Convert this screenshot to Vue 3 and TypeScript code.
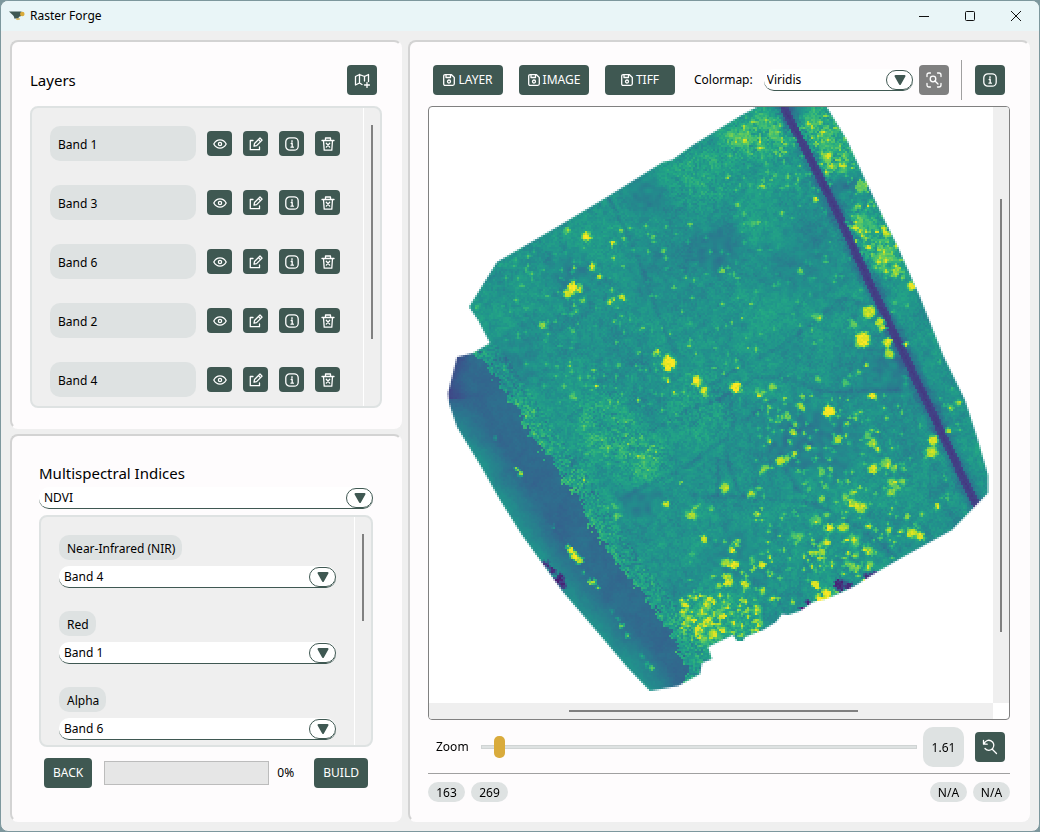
<script setup lang="ts">
import { onMounted, ref } from 'vue'

const layers = ref(['Band 1', 'Band 3', 'Band 6', 'Band 2', 'Band 4'])
const bands = ['Band 1', 'Band 2', 'Band 3', 'Band 4', 'Band 6']
const indexName = ref('NDVI')
const inputs = ref([
  { id: 'nir', label: 'Near-Infrared (NIR)', band: 'Band 4' },
  { id: 'red', label: 'Red', band: 'Band 1' },
  { id: 'alpha', label: 'Alpha', band: 'Band 6' },
])
const exports = ['LAYER', 'IMAGE', 'TIFF']
const colormap = ref('Viridis')
const zoom = ref(3)
const progress = ref(0)
const canvas = ref<HTMLCanvasElement | null>(null)

type Point = [number, number]
type Blob = [number, number, number, number]

// Scene bounds of the raster view; one cell covers two scene units.
const LEFT = 429
const TOP = 107
const COLS = 282
const ROWS = 298
const CELL = 2

const VIRIDIS = [
  [68, 1, 84], [72, 36, 117], [65, 68, 135], [53, 95, 141], [42, 120, 142], [33, 145, 140],
  [34, 168, 132], [68, 191, 112], [122, 209, 81], [189, 223, 38], [253, 231, 37],
]

const OUTLINE: Point[] = [
  [740, 116], [757, 107], [757, 100], [822, 100], [828, 109], [847, 140], [863, 175], [883, 217], [897, 245],
  [920, 297], [943, 355], [965, 400], [977, 437], [988, 475], [988, 493], [952, 530], [903, 557], [877, 572],
  [853, 587], [840, 593], [826, 599], [813, 602], [800, 611], [788, 615], [782, 614], [776, 622], [763, 630],
  [745, 637], [743, 641], [737, 641], [733, 635], [708, 647], [712, 659], [702, 663], [700, 674], [678, 686],
  [650, 691], [627, 667], [600, 635], [563, 592], [540, 560], [522, 535], [500, 500], [482, 468], [457, 427],
  [449, 403], [448, 393], [457, 357], [473, 353], [490, 343], [478, 320], [469, 307], [497, 262], [557, 227],
  [607, 197], [663, 162], [672, 160], [693, 145],
]

const FIELD_EDGE: Point[] = [
  [470, 345], [483, 360], [503, 390], [510, 400], [540, 447], [573, 493], [590, 523], [613, 557], [640, 593],
  [667, 627], [687, 667], [684, 700],
]

const OUTER_RIM: Point[] = [
  [449, 403], [457, 427], [482, 468], [500, 500], [522, 535], [540, 560], [563, 592], [600, 635], [627, 667], [650, 691],
]

const ROAD: Point[] = [
  [783, 104], [785, 110], [830, 197], [867, 277], [897, 340], [926, 400], [950, 450], [976, 505],
]

const TRACKS: Point[][] = [
  [[608, 197], [635, 250], [655, 305], [670, 345], [684, 360]],
  [[565, 475], [583, 450], [627, 437], [653, 430], [687, 410], [717, 400], [757, 378], [790, 378], [820, 392], [897, 390]],
  [[620, 500], [647, 485], [687, 467], [727, 437], [735, 420], [730, 402], [717, 400]],
  [[727, 437], [727, 460], [738, 490], [743, 495]],
  [[690, 495], [730, 497], [813, 503], [863, 530], [890, 553]],
  [[700, 392], [730, 373], [780, 347], [813, 323], [843, 297], [865, 304]],
  [[735, 425], [752, 415], [775, 400]],
  [[787, 470], [797, 490]],
  [[718, 460], [718, 495]],
]

const PATCHES: Blob[] = [
  [745, 140, 22, 0.07], [773, 130, 20, 0.08], [815, 130, 20, 0.12], [835, 160, 20, 0.12], [700, 175, 28, 0.06],
  [860, 230, 20, 0.08], [880, 255, 16, 0.1], [607, 427, 30, 0.08], [640, 460, 26, 0.08], [580, 480, 18, 0.05],
  [700, 410, 30, 0.05], [720, 625, 34, 0.06], [650, 275, 30, -0.02], [715, 250, 22, -0.05], [510, 365, 30, -0.03],
  [800, 265, 40, -0.03], [570, 275, 18, -0.05], [820, 450, 34, -0.05], [790, 430, 28, -0.04], [640, 500, 18, -0.06],
  [890, 375, 26, -0.04], [735, 560, 28, -0.04], [845, 180, 12, -0.1], [797, 115, 12, -0.08], [645, 195, 18, -0.05],
]

const BLOBS: Blob[] = [
  [568, 231, 3, 0.92], [587, 237, 5, 0.97], [613, 242, 2, 1], [613, 258, 2, 0.9], [592, 267, 4, 0.93], [599, 277, 3, 0.93],
  [573, 288, 6, 0.99], [567, 295, 4, 0.92], [579, 289, 4, 0.95], [583, 301, 3, 0.85], [622, 297, 3, 0.92],
  [610, 302, 3, 0.95], [543, 326, 4, 0.85], [643, 329, 2, 0.98], [669, 363, 8, 1], [658, 352, 3, 0.95], [655, 355, 2, 0.95],
  [697, 381, 5, 1], [704, 390, 4, 0.93], [736, 387, 6, 1], [738, 368, 2, 1], [637, 352, 2, 0.85], [689, 345, 2, 0.85],
  [722, 270, 3, 0.8], [697, 263, 2, 0.85], [667, 226, 2, 0.85], [653, 237, 2, 0.8], [664, 251, 2, 0.8], [723, 305, 2, 0.85],
  [731, 135, 4, 0.8], [477, 308, 3, 0.7], [577, 311, 2, 0.85], [614, 321, 2, 0.8], [668, 380, 2, 0.85], [674, 392, 2, 0.95],
  [573, 396, 3, 0.75], [827, 157, 5, 0.85], [816, 199, 3, 1], [863, 186, 6, 0.78], [884, 229, 3, 0.98], [887, 234, 3, 0.95],
  [858, 223, 7, 0.73], [882, 255, 11, 0.74], [896, 272, 5, 0.75], [911, 286, 4, 0.98], [869, 312, 7, 0.91], [880, 322, 5, 0.9],
  [883, 328, 3, 0.9], [854, 325, 4, 0.78], [863, 340, 8, 0.99], [887, 343, 5, 0.95], [889, 354, 5, 0.88], [906, 344, 3, 1],
  [818, 318, 5, 0.74], [866, 366, 2, 0.9], [858, 372, 3, 0.78], [819, 379, 2, 0.9], [847, 383, 4, 0.72], [873, 396, 4, 1],
  [760, 395, 5, 0.78], [772, 387, 4, 0.82], [800, 271, 2, 0.82], [895, 302, 2, 0.72], [745, 140, 9, 0.72], [773, 133, 7, 0.72],
  [762, 118, 8, 0.66], [738, 205, 3, 0.8], [753, 223, 3, 0.72], [742, 318, 2, 0.85], [830, 140, 9, 0.68], [812, 120, 8, 0.66],
  [843, 168, 6, 0.7], [829, 411, 6, 1], [838, 440, 5, 0.88], [856, 414, 5, 0.77], [847, 423, 2, 0.9], [801, 407, 5, 0.86],
  [787, 415, 4, 0.82], [770, 407, 3, 0.82], [770, 420, 3, 0.7], [780, 421, 3, 0.75], [792, 432, 4, 0.82], [795, 425, 3, 0.8],
  [790, 442, 2, 0.8], [808, 448, 3, 0.8], [795, 454, 4, 0.9], [781, 461, 5, 0.9], [787, 458, 3, 0.85], [764, 469, 4, 0.84],
  [798, 471, 3, 0.82], [816, 459, 3, 0.82], [822, 472, 4, 0.76], [831, 469, 2, 0.85], [867, 437, 5, 0.76], [873, 443, 5, 0.85],
  [878, 449, 3, 0.8], [950, 408, 3, 0.88], [958, 403, 3, 0.8], [949, 430, 3, 0.92], [933, 440, 6, 0.94], [931, 452, 6, 0.91],
  [873, 469, 5, 0.92], [887, 463, 6, 0.8], [893, 468, 4, 0.8], [892, 483, 5, 0.8], [902, 482, 4, 0.82], [892, 492, 5, 0.82],
  [898, 487, 3, 0.78], [846, 497, 4, 0.8], [852, 493, 3, 0.8], [853, 503, 5, 0.85], [860, 508, 6, 0.87], [864, 506, 4, 0.85],
  [938, 507, 4, 0.98], [825, 487, 3, 0.82], [821, 499, 3, 0.86], [751, 494, 4, 0.9], [757, 514, 3, 0.96], [827, 515, 3, 0.82],
  [817, 519, 5, 0.72], [830, 528, 4, 1], [843, 528, 5, 0.88], [869, 526, 3, 1], [889, 531, 3, 0.92], [907, 517, 3, 0.85],
  [915, 525, 4, 0.78], [912, 533, 6, 0.93], [920, 536, 5, 0.96], [903, 531, 3, 0.84], [922, 514, 2, 0.84], [855, 538, 6, 0.75],
  [868, 550, 4, 0.82], [826, 542, 4, 0.86], [822, 552, 4, 0.86], [819, 558, 3, 0.8], [812, 553, 3, 0.85], [795, 537, 6, 0.75],
  [850, 566, 4, 0.78], [870, 565, 4, 0.8], [857, 555, 3, 0.72], [737, 543, 3, 1], [732, 550, 3, 1], [734, 565, 5, 0.96],
  [762, 565, 3, 0.95], [753, 560, 3, 0.78], [746, 585, 4, 0.9], [763, 590, 2, 0.88], [816, 585, 4, 0.97], [792, 602, 2, 0.9],
  [753, 610, 4, 0.72], [760, 622, 4, 0.76], [734, 624, 3, 0.85], [725, 488, 4, 0.9], [681, 482, 2, 0.88], [667, 504, 4, 0.92],
  [692, 515, 5, 0.88], [696, 507, 3, 0.85], [687, 512, 3, 0.8], [711, 509, 3, 0.8], [704, 539, 4, 0.92], [615, 507, 4, 0.74],
  [617, 515, 4, 0.74], [608, 508, 3, 0.7], [725, 563, 4, 0.86], [727, 577, 4, 0.92], [728, 583, 5, 0.94], [719, 586, 3, 0.86],
  [707, 605, 5, 0.8], [683, 602, 3, 0.76], [688, 618, 4, 0.88], [684, 613, 3, 0.84], [698, 630, 4, 0.8], [707, 623, 5, 0.82],
  [713, 633, 5, 0.86], [722, 630, 3, 0.88], [722, 615, 3, 0.8], [703, 640, 4, 0.8], [827, 594, 6, 1], [819, 598, 5, 1],
  [836, 591, 3, 0.85], [840, 585, 6, 0.14], [849, 586, 4, 0.16], [868, 577, 5, 0.16], [874, 573, 3, 0.16], [802, 609, 3, 0.12],
  [808, 603, 3, 0.14], [568, 547, 2, 0.85], [571, 551, 3, 1], [575, 556, 4, 1], [580, 561, 3, 0.95], [592, 582, 3, 0.92],
  [597, 588, 2, 0.85], [584, 572, 2, 0.7], [517, 470, 2, 0.9], [521, 474, 2, 0.88], [495, 437, 2, 0.6], [553, 527, 2, 0.62],
  [612, 611, 2, 0.6], [617, 619, 2, 0.68], [622, 626, 2, 0.82], [627, 636, 3, 0.85], [642, 656, 2, 0.62], [647, 664, 2, 0.68],
  [652, 668, 2, 0.75], [546, 564, 4, 0.14], [552, 572, 4, 0.16], [559, 579, 5, 0.12], [563, 586, 4, 0.14],
]

// x, y, width, height, count, strength
const SPRINKLES = [
  [755, 395, 150, 180, 190, 0.22], [680, 595, 80, 45, 110, 0.26], [560, 215, 200, 190, 110, 0.18], [725, 110, 130, 80, 170, 0.16],
  [850, 190, 60, 90, 110, 0.18], [500, 360, 180, 120, 110, 0.14], [800, 540, 70, 50, 50, 0.22], [690, 540, 90, 60, 35, 0.24],
  [740, 200, 130, 190, 60, 0.14], [500, 250, 80, 100, 50, 0.14], [890, 300, 80, 200, 50, 0.14],
]

function hash(x: number, y: number): number {
  let h = Math.imul(x, 374761393) ^ Math.imul(y, 668265263)
  h = Math.imul(h ^ (h >>> 13), 1274126177)
  h = Math.imul(h ^ (h >>> 15), 2246822519)
  return ((h ^ (h >>> 16)) >>> 0) / 4294967295
}

function noise(x: number, y: number, scale: number): number {
  const gx = Math.floor(x / scale)
  const gy = Math.floor(y / scale)
  const smooth = (t: number) => t * t * (3 - 2 * t)
  const fx = smooth(x / scale - gx)
  const fy = smooth(y / scale - gy)
  const upper = hash(gx, gy) * (1 - fx) + hash(gx + 1, gy) * fx
  const lower = hash(gx, gy + 1) * (1 - fx) + hash(gx + 1, gy + 1) * fx
  return upper * (1 - fy) + lower * fy - 0.5
}

function distanceTo(path: Point[], x: number, y: number): number {
  let best = Infinity
  for (let i = 1; i < path.length; i++) {
    const [ax, ay] = path[i - 1]
    const dx = path[i][0] - ax
    const dy = path[i][1] - ay
    const t = Math.max(0, Math.min(1, ((x - ax) * dx + (y - ay) * dy) / (dx * dx + dy * dy)))
    best = Math.min(best, Math.hypot(x - ax - t * dx, y - ay - t * dy))
  }
  return best
}

function edgeX(y: number): number {
  for (let i = 1; i < FIELD_EDGE.length; i++) {
    const [ax, ay] = FIELD_EDGE[i - 1]
    const [bx, by] = FIELD_EDGE[i]
    if (y >= ay && y <= by) return ax + ((bx - ax) * (y - ay)) / (by - ay)
  }
  return -Infinity
}

function vegetation(x: number, y: number): number {
  const grain = hash(Math.round(x), Math.round(y)) - 0.5
  let value = 0.51 + grain * 0.07 + noise(x, y, 5) * 0.08 + noise(x, y, 14) * 0.06 + noise(x, y, 45) * 0.06
  for (const [px, py, radius, delta] of PATCHES) {
    const falloff = 1 - Math.hypot(x - px, y - py) / (radius * 1.5)
    if (falloff > 0) value += delta * Math.min(1, falloff * 1.6) * (1 + grain * 1.2 + noise(x, y, 6) * 1.4)
  }
  for (const track of TRACKS) {
    const d = distanceTo(track, x, y)
    if (d < 4) value -= 0.065 * (1 - d / 4)
  }
  const inside = x - edgeX(y)
  const ragged = inside + noise(x, y, 4) * 12 + grain * 5
  if (ragged < 0) {
    value = 0.345 + noise(x, y, 20) * 0.05 + noise(x, y, 5) * 0.03 + grain * 0.02
    const rim = distanceTo(OUTER_RIM, x, y)
    if (rim < 30 && y > 400) value += 0.16 * (1 - rim / 30) * Math.min(1, (y - 400) / 50)
    if (y < 400) value -= Math.max(0, (472 - x) / 26) * 0.14
  } else if (inside < 26) {
    value += 0.05 * (1 - inside / 26) + grain * 0.12 + noise(x, y, 4) * 0.08
  }
  const road = distanceTo(ROAD, x, y)
  if (road < 4) value = 0.17 + grain * 0.03 + road * 0.01
  else if (road < 12) value -= (12 - road) * 0.018
  for (const [bx, by, radius, target] of BLOBS) {
    const looseness = target < 0.8 && target > 0.5 ? radius * 1.5 : 3
    const d = Math.hypot(x - bx, y - by) + grain * 2.4 + noise(x, y, 4) * looseness
    if (d < radius + 1) {
      const mix = Math.min(1, (radius + 1 - d) / 3)
      value += (target + grain * 0.1 - value) * mix
    }
  }
  return Math.max(0.08, Math.min(1, value))
}

function paint(ctx: CanvasRenderingContext2D): void {
  const field = new Float32Array(COLS * ROWS)
  for (let row = 0; row < ROWS; row++) {
    for (let col = 0; col < COLS; col++) {
      field[row * COLS + col] = vegetation(LEFT + col * CELL + 1, TOP + row * CELL + 1)
    }
  }
  SPRINKLES.forEach(([x, y, width, height, count, strength], group) => {
    for (let i = 0; i < count; i++) {
      const px = x + hash(i * 3 + 11, group * 31 + 7) * width
      const py = y + hash(i * 5 + 503, group * 17 + 3) * height
      const at = Math.floor((py - TOP) / CELL) * COLS + Math.floor((px - LEFT) / CELL)
      if (px < edgeX(py) || field[at] < 0.4) continue
      const boost = strength * (0.5 + hash(i, 91 + group) * 0.9)
      field[at] = Math.min(0.95, field[at] + boost)
      for (const near of [1, -1, COLS, -COLS]) {
        const share = hash(i + near, group) * 0.8
        field[at + near] = Math.min(0.95, field[at + near] + boost * share)
      }
    }
  })
  const image = ctx.createImageData(COLS, ROWS)
  field.forEach((value, i) => {
    const position = value * (VIRIDIS.length - 1)
    const stop = Math.min(VIRIDIS.length - 2, Math.floor(position))
    const mix = position - stop
    for (let c = 0; c < 3; c++) {
      image.data[i * 4 + c] = VIRIDIS[stop][c] * (1 - mix) + VIRIDIS[stop + 1][c] * mix
    }
    image.data[i * 4 + 3] = 255
  })
  ctx.putImageData(image, 0, 0)
  ctx.globalCompositeOperation = 'destination-in'
  ctx.beginPath()
  OUTLINE.forEach(([x, y]) => ctx.lineTo((x - LEFT) / CELL, (y - TOP) / CELL))
  ctx.closePath()
  ctx.fill()
}

onMounted(() => {
  const ctx = canvas.value?.getContext('2d')
  if (ctx) paint(ctx)
})
</script>

<template>
  <div class="desktop">
    <div class="window">
      <header class="titlebar">
        <svg class="logo" viewBox="0 0 16 12" aria-hidden="true">
          <path d="M0 1.500h12.500v4.500c-1.500.2-2.500.7-2.900 1.500v.9H5.200v-.9C5 5.500 2.500 4.200 0 1.500z" fill="#3f5852" />
          <circle cx="13.300" cy="4" r="2.300" fill="#d9ab3c" />
          <path d="M7 8.400h4v1H9.700L9 10.200l-.700-.8H7z" fill="#d9ab3c" />
        </svg>
        <span class="app-name">Raster Forge</span>
        <button class="caption" type="button" aria-label="Minimize">
          <svg viewBox="0 0 12 12"><path d="M1 6.500h10" /></svg>
        </button>
        <button class="caption" type="button" aria-label="Maximize">
          <svg viewBox="0 0 12 12"><rect x="1.500" y="1.500" width="9" height="9" rx="1" /></svg>
        </button>
        <button class="caption" type="button" aria-label="Close">
          <svg viewBox="0 0 12 12"><path d="M1 1l10 10M11 1L1 11" /></svg>
        </button>
      </header>

      <main class="workspace">
        <div class="side">
          <section class="panel layers">
            <div class="panel-head">
              <h2>Layers</h2>
              <button class="btn square" type="button" aria-label="Add layer">
                <svg class="icon i16" viewBox="0 0 16 16">
                  <path d="M8 12.500l-2.500-1.500L1.500 13V4.500l4-2 5 2 4-2v7M5.500 2.500V11M10.500 4.500V9M13 10.500v5M10.500 13h5" />
                </svg>
              </button>
            </div>
            <div class="scroll-box">
              <ul class="rows">
                <li v-for="layer in layers" :key="layer" class="row">
                  <span class="name">{{ layer }}</span>
                  <button class="btn small" type="button" :aria-label="`Show ${layer}`">
                    <svg class="icon i14" viewBox="0 0 14 14">
                      <path d="M.800 7C2.300 4.200 4.500 2.900 7 2.900S11.700 4.200 13.200 7C11.700 9.800 9.500 11.100 7 11.100S2.300 9.800.800 7z" />
                      <circle cx="7" cy="7" r="1.600" />
                    </svg>
                  </button>
                  <button class="btn small" type="button" :aria-label="`Edit ${layer}`">
                    <svg class="icon i14" viewBox="0 0 14 14">
                      <path d="M4 3.500H1.300v9.200h9.200V10M5 9.200l.500-2.700L11 1l2.100 2.100L7.600 8.600zM9.500 2.600l2 2" />
                    </svg>
                  </button>
                  <button class="btn small" type="button" :aria-label="`About ${layer}`">
                    <svg class="icon i14" viewBox="0 0 14 14">
                      <rect x=".800" y=".800" width="12.400" height="12.400" rx="4" />
                      <path d="M6.200 6.500H7.200V10M6 10.200h2.400M7 3.700v1.300" />
                    </svg>
                  </button>
                  <button class="btn small" type="button" :aria-label="`Delete ${layer}`">
                    <svg class="icon i14" viewBox="0 0 14 14">
                      <path d="M1 3.500h12M4.500 3.500V1h5v2.500M2.500 3.500l.700 9.700h7.600l.700-9.700M5.300 6.300l3.400 3.800M8.700 6.300l-3.400 3.800" />
                    </svg>
                  </button>
                </li>
              </ul>
              <div class="track"><span class="thumb layers-thumb"></span></div>
            </div>
          </section>

          <section class="panel indices">
            <h2 id="indices-title">Multispectral Indices</h2>
            <div class="combo">
              <select v-model="indexName" aria-labelledby="indices-title">
                <option>NDVI</option>
                <option>NDWI</option>
              </select>
              <span class="arrow"><svg viewBox="0 0 14 12"><path d="M2.500 2h9L7 10z" /></svg></span>
            </div>
            <div class="scroll-box">
              <div class="fields">
                <div v-for="input in inputs" :key="input.id" class="field">
                  <label :for="input.id">{{ input.label }}</label>
                  <div class="combo">
                    <select :id="input.id" v-model="input.band">
                      <option v-for="band in bands" :key="band">{{ band }}</option>
                    </select>
                    <span class="arrow"><svg viewBox="0 0 14 12"><path d="M2.500 2h9L7 10z" /></svg></span>
                  </div>
                </div>
              </div>
              <div class="track"><span class="thumb fields-thumb"></span></div>
            </div>
            <div class="actions">
              <button class="btn" type="button">BACK</button>
              <progress :value="progress" max="100" aria-label="Build progress"></progress>
              <span class="percent">{{ progress }}%</span>
              <button class="btn" type="button">BUILD</button>
            </div>
          </section>
        </div>

        <section class="panel viewer">
          <div class="toolbar">
            <div class="exports">
              <button v-for="name in exports" :key="name" class="btn export" type="button">
                <svg class="icon i12" viewBox="0 0 12 12">
                  <path d="M.700 2.200Q.700.700 2.200.700H8.500L11.300 3.500V9.800Q11.300 11.300 9.800 11.300H2.200Q.700 11.300.700 9.800zM3 1v2.500h4.500V1" />
                  <circle cx="6" cy="7.500" r="1.500" />
                </svg>
                {{ name }}
              </button>
            </div>
            <label for="colormap">Colormap:</label>
            <div class="combo">
              <select id="colormap" v-model="colormap">
                <option>Viridis</option>
                <option>Gray</option>
              </select>
              <span class="arrow"><svg viewBox="0 0 14 12"><path d="M2.500 2h9L7 10z" /></svg></span>
            </div>
            <button class="btn square muted" type="button" aria-label="Inspect area">
              <svg class="icon i16" viewBox="0 0 16 16">
                <path d="M1 4.500V3q0-2 2-2h1.500M11.500 1H13q2 0 2 2v1.500M15 11.500V13q0 2-2 2h-1.500M4.500 15H3q-2 0-2-2v-1.500M9 9l3 3" />
                <circle cx="7" cy="7" r="2.800" />
              </svg>
            </button>
            <span class="divider"></span>
            <button class="btn square" type="button" aria-label="Information">
              <svg class="icon i14" viewBox="0 0 14 14">
                <rect x=".800" y=".800" width="12.400" height="12.400" rx="4" />
                <path d="M6.200 6.500H7.200V10M6 10.200h2.400M7 3.700v1.300" />
              </svg>
            </button>
          </div>

          <div class="view">
            <canvas ref="canvas" width="282" height="298" role="img" aria-label="NDVI raster"></canvas>
            <div class="v-track"><span></span></div>
            <div class="h-track"><span></span></div>
          </div>

          <div class="zoom">
            <label for="zoom">Zoom</label>
            <input id="zoom" v-model="zoom" type="range" min="0" max="100" />
            <output for="zoom">1.61</output>
            <button class="btn square" type="button" aria-label="Reset zoom">
              <svg class="icon i16" viewBox="0 0 16 16">
                <path d="M1.500 1.500v3.700h3.700M2 5A5 5 0 1 1 3 9.500M10 10l4.500 4.500" />
              </svg>
            </button>
          </div>

          <footer class="status">
            <span class="chip">163</span>
            <span class="chip">269</span>
            <span class="chip push">N/A</span>
            <span class="chip">N/A</span>
          </footer>
        </section>
      </main>
    </div>
  </div>
</template>

<style>
html,
body {
  margin: 0;
  background: #7d979d;
}
</style>

<style scoped>
.desktop,
.desktop * {
  box-sizing: border-box;
}
.desktop {
  font-family: 'Noto Sans', 'Open Sans', sans-serif;
  font-size: 12px;
  line-height: 16px;
  color: #000;
}
.desktop button,
.desktop select,
.desktop input {
  font: inherit;
  margin: 0;
}
.window {
  display: flex;
  flex-direction: column;
  min-height: 100vh;
  border: 1px solid #7d979d;
  border-radius: 8px;
  background: #efefef;
  overflow: hidden;
}
.titlebar {
  display: flex;
  align-items: center;
  height: 30px;
  padding-left: 8px;
  background: #e9f5f7;
}
.logo {
  width: 16px;
  height: 12px;
  margin-right: 5px;
}
.app-name {
  margin-right: auto;
}
.caption {
  display: grid;
  place-items: center;
  width: 46px;
  height: 30px;
  padding: 0;
  border: 0;
  background: none;
}
.caption svg {
  width: 12px;
  height: 12px;
  fill: none;
  stroke: #111;
}
.workspace {
  flex: 1;
  display: grid;
  grid-template-columns: minmax(0, 392fr) minmax(0, 622fr);
  gap: 6px;
  padding: 9px;
}
.side {
  display: grid;
  grid-template-rows: auto 1fr;
  gap: 5px;
}
.panel {
  display: flex;
  flex-direction: column;
  border: 2px solid;
  border-color: #d3d3d3 #fefcfd #fefcfd #d3d3d3;
  border-radius: 8px;
  background: #fefcfd;
}
h2 {
  margin: 0;
  font-size: 15px;
  line-height: 20px;
  font-weight: 400;
}
.layers {
  padding: 23px 18px 19px;
}
.panel-head {
  display: flex;
  align-items: center;
  justify-content: space-between;
  padding-right: 5px;
  margin-bottom: 11px;
}
.btn {
  display: inline-flex;
  align-items: center;
  justify-content: center;
  flex: none;
  gap: 3px;
  height: 30px;
  padding: 0 9px;
  border: 0;
  border-radius: 4px;
  background: #3f5852;
  color: #fff;
}
.btn.square {
  width: 30px;
  padding: 0;
}
.btn.small {
  width: 25px;
  height: 25px;
  padding: 0;
}
.btn.muted {
  background: #808080;
}
.btn.export {
  width: 70px;
  padding: 0;
}
.icon {
  fill: none;
  stroke: #fff;
  stroke-width: 1.3;
  stroke-linejoin: round;
  stroke-linecap: round;
}
.i12 {
  width: 12px;
  height: 12px;
}
.i14 {
  width: 14px;
  height: 14px;
}
.i16 {
  width: 16px;
  height: 16px;
}
.scroll-box {
  flex: 1;
  display: grid;
  grid-template-columns: minmax(0, 1fr) 17px;
  border: 2px solid #dee2e2;
  border-radius: 8px;
  background: #efefef;
  overflow: hidden;
}
.track {
  display: flex;
  flex-direction: column;
  align-items: center;
  padding: 17px 0;
  border-left: 1px solid #fff;
}
.thumb {
  width: 2px;
  background: #808080;
}
.layers-thumb {
  height: 81%;
}
.fields-thumb {
  height: 45%;
}
.rows {
  display: flex;
  flex-direction: column;
  gap: 24px;
  margin: 0;
  padding: 18px 23px 9px 18px;
  list-style: none;
}
.row {
  display: flex;
  align-items: center;
  gap: 11px;
}
.name {
  flex: 1;
  height: 35px;
  padding: 2px 8px 0;
  border-radius: 10px;
  background: #dee2e2;
  line-height: 34px;
}
.indices {
  padding: 27px 27px 32px;
}
.indices h2 {
  margin-bottom: 4px;
}
.indices > .combo {
  margin-bottom: 6px;
}
.combo {
  display: grid;
  align-items: center;
}
.combo select,
.arrow {
  grid-area: 1 / 1;
}
.combo select {
  width: 100%;
  height: 22px;
  padding: 0 32px 0 5px;
  border: 0;
  border-bottom: 1px solid #3f5852;
  border-radius: 10px;
  background: #fff;
  color: #000;
  appearance: none;
}
.arrow {
  display: grid;
  place-items: center;
  justify-self: end;
  width: 27px;
  height: 20px;
  border: 1px solid #3f5852;
  border-radius: 10px;
  background: #fff;
  pointer-events: none;
}
.arrow svg {
  width: 14px;
  height: 12px;
  fill: #3f5852;
  stroke: #3f5852;
  stroke-width: 2;
  stroke-linejoin: round;
}
.fields {
  display: flex;
  flex-direction: column;
  gap: 23px;
  padding: 18px 18px 5px;
}
.field label {
  display: inline-block;
  height: 25px;
  padding: 1px 7px 0 8px;
  margin-bottom: 6px;
  border-radius: 10px;
  background: #dee2e2;
  line-height: 25px;
  vertical-align: top;
}
.actions {
  display: flex;
  align-items: center;
  padding: 0 5px;
  margin-top: 11px;
}
progress {
  flex: 1;
  min-width: 0;
  height: 24px;
  margin: 0 8px 0 12px;
  border: 1px solid #bcbcbc;
  background: #e6e6e6;
  appearance: none;
}
progress::-webkit-progress-bar {
  background: #e6e6e6;
}
progress::-webkit-progress-value {
  background: #3f5852;
}
.percent {
  width: 37px;
}
.viewer {
  padding: 18px;
}
.toolbar {
  display: flex;
  align-items: center;
  height: 40px;
  padding: 0 5px;
  margin-bottom: 6px;
}
.exports {
  display: flex;
  gap: 16px;
  margin-right: 19px;
}
.toolbar .combo {
  flex: 1;
  min-width: 0;
  margin: 0 6px 0 11px;
}
.toolbar .combo select {
  padding-left: 3px;
}
.divider {
  width: 1px;
  height: 40px;
  margin: 0 13px 0 12px;
  background: #a0a0a0;
}
.view {
  flex: 1;
  display: grid;
  grid-template: minmax(0, 1fr) 16px / minmax(0, 1fr) 16px;
  border: 1px solid #808080;
  border-radius: 4px;
  background: #fff;
  overflow: hidden;
}
.view canvas {
  display: block;
  width: 100%;
  height: auto;
  image-rendering: pixelated;
}
.v-track,
.h-track {
  display: grid;
  background: #efefef;
}
.v-track {
  grid-template-rows: 92fr 433fr 71fr;
  justify-items: center;
}
.v-track span {
  grid-row: 2;
  width: 2px;
  background: #808080;
}
.h-track {
  grid-template-columns: 140fr 289fr 135fr;
  align-items: center;
}
.h-track span {
  grid-column: 2;
  height: 2px;
  background: #808080;
}
.zoom {
  display: flex;
  align-items: center;
  padding: 7px 5px 6px 8px;
  border-bottom: 1px solid #a0a0a0;
}
.zoom input {
  flex: 1;
  min-width: 0;
  height: 22px;
  margin: 0 6px 0 12px;
  background: none;
  appearance: none;
}
.zoom input::-webkit-slider-runnable-track {
  height: 4px;
  border: 1px solid #d0d4d4;
  background: #dee2e2;
}
.zoom input::-webkit-slider-thumb {
  width: 11px;
  height: 22px;
  margin-top: -10px;
  border-radius: 5px;
  background: #d9ab3c;
  appearance: none;
}
output {
  width: 41px;
  height: 40px;
  margin-right: 11px;
  border-radius: 10px;
  background: #dee2e2;
  line-height: 41px;
  text-align: center;
}
.status {
  display: flex;
  gap: 6px;
  padding-top: 8px;
}
.chip {
  width: 37px;
  height: 20px;
  border-radius: 10px;
  background: #dee2e2;
  line-height: 21px;
  text-align: center;
}
.push {
  margin-left: auto;
}
</style>
